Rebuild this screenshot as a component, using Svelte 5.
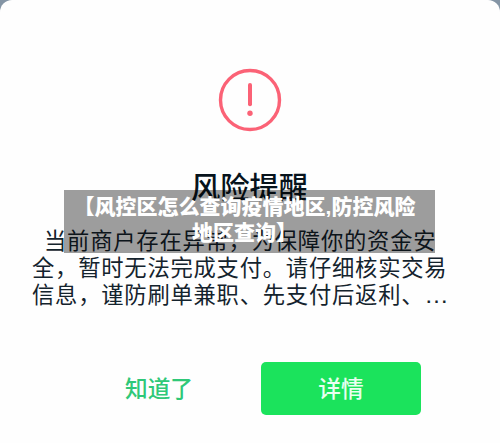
<script lang="ts">
  const title = '风险提醒'

  const message = [
    '当前商户存在异常，为保障你的资金安',
    '全，暂时无法完成支付。请仔细核实交易',
    '信息，谨防刷单兼职、先支付后返利、',
  ]

  const caption = ['【风控区怎么查询疫情地区,防控风险', '地区查询】']
</script>

<main class="screen">
  <section class="dialog">
    <svg class="alert-icon" width="64" height="64" viewBox="0 0 64 64" aria-hidden="true">
      <circle cx="32" cy="32" r="29.5" />
      <path class="bar" d="M32 17v19.3" />
      <circle class="dot" cx="32" cy="45.2" r="2.7" />
    </svg>

    <h1>{title}</h1>

    <div class="message">
      {#each message as line, i}
        <p>{line}{#if i === message.length - 1}<span class="more">…</span>{/if}</p>
      {/each}
    </div>

    <div class="actions">
      <button class="dismiss">知道了</button>
      <button class="details">详情</button>
    </div>
  </section>

  <!-- Caption banner over the dialog -->
  <div class="caption">
    {#each caption as line}
      <p>{line}</p>
    {/each}
  </div>
</main>

<style>
  :global(body) {
    margin: 0;
    background: #8495a5;
  }

  .screen {
    position: relative;
    width: 500px;
    height: 443px;
    overflow: hidden;
    font-family: 'Noto Sans CJK SC', sans-serif;
  }

  .dialog {
    display: flex;
    flex-direction: column;
    align-items: center;
    box-sizing: border-box;
    height: 100%;
    padding-top: 68px;
    background: #fefefe;
    border-radius: 12px 12px 0 0;
  }

  .alert-icon {
    flex-shrink: 0;
    fill: none;
    stroke: #fb6276;
    stroke-width: 3.4;
    stroke-linecap: round;
  }

  .alert-icon .bar {
    stroke-width: 4;
  }

  .alert-icon .dot {
    fill: #fb6276;
    stroke: none;
  }

  h1 {
    margin: 33px 0 0;
    padding-right: 1px;
    font-size: 29.3px;
    font-weight: 500;
    line-height: 40px;
    color: #07131c;
  }

  .message {
    align-self: stretch;
    margin-top: 21px;
    padding-left: 32px;
    font-size: 22.3px;
    line-height: 27px;
    letter-spacing: 0.78px;
    color: #14232d;
    white-space: nowrap;
  }

  p {
    margin: 0;
  }

  .message p:first-child {
    padding-left: 12px;
  }

  .more {
    font-family: 'Liberation Sans', sans-serif;
    font-size: 24.5px;
    line-height: 1;
  }

  .actions {
    display: flex;
    align-self: stretch;
    margin-top: 54px;
    padding-left: 57px;
  }

  button {
    height: 53px;
    padding: 0 0 2px;
    border: 0;
    font-family: inherit;
    font-size: 22.7px;
    font-weight: 500;
  }

  .dismiss {
    width: 204px;
    background: none;
    color: #2fc878;
  }

  .details {
    width: 160px;
    border-radius: 5px;
    background: #1be35c;
    color: #e9fff0;
  }

  .caption {
    position: absolute;
    top: 190px;
    left: 64px;
    box-sizing: border-box;
    width: 371px;
    height: 63px;
    padding: 4px 10px 0 0;
    background: rgba(0, 0, 0, 0.38);
    color: #fff;
    font-family: 'Liberation Sans', 'Noto Sans CJK SC', sans-serif;
    font-size: 21px;
    font-weight: 900;
    line-height: 26px;
    text-align: center;
    white-space: nowrap;
  }
</style>
